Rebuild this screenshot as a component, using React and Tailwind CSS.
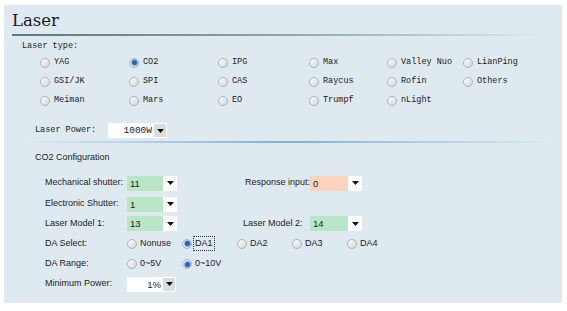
import React from "react";

const mono = { fontFamily: '"Liberation Mono", "DejaVu Sans Mono", monospace' };
const sans = { fontFamily: '"Liberation Sans", Arial, sans-serif' };

function Radio({ checked }) {
  return (
    <span className="inline-flex items-center justify-center w-[10px] h-[10px] rounded-full border border-[#aab3b8] bg-gradient-to-br from-white to-[#d0d6d9] shrink-0">
      {checked && <span className="w-[5px] h-[5px] rounded-full bg-[#2a63b8] ring-1 ring-[#8fb4e4]" />}
    </span>
  );
}

function Arrow() {
  return (
    <svg width="7" height="4" viewBox="0 0 7 4">
      <path d="M0 0h7L3.5 4z" fill="#111" />
    </svg>
  );
}

function Combo({ value, color, width = "w-[50px]" }) {
  return (
    <div className={`flex h-[15px] ${width} bg-white shrink-0`}>
      <div className={`flex-1 ${color} text-[9.5px] pl-[3px] leading-[15px] text-[#222]`}>{value}</div>
      <div className="w-[14px] flex items-center justify-center">
        <Arrow />
      </div>
    </div>
  );
}

function PowerCombo({ value, width }) {
  return (
    <div className={`flex h-[15px] ${width} bg-white items-center shrink-0`}>
      <div className="flex-1 text-right pr-[2px] text-[9.5px] leading-[15px] text-[#222]">{value}</div>
      <div className="w-[12px] h-[13px] mr-[1px] bg-[#dcdcdc] flex items-center justify-center">
        <Arrow />
      </div>
    </div>
  );
}

const laserRows = [
  [["YAG"], ["CO2", true], ["IPG"], ["Max"], ["Valley Nuo"], ["LianPing"]],
  [["GSI/JK"], ["SPI"], ["CAS"], ["Raycus"], ["Rofin"], ["Others"]],
  [["Meiman"], ["Mars"], ["EO"], ["Trumpf"], ["nLight"]],
];
const colW = ["w-[89px]", "w-[89px]", "w-[91px]", "w-[78px]", "w-[76px]", "w-[80px]"];

function LabelRow({ label, children, h }) {
  return (
    <div className={`flex items-center ${h} pl-[41px] whitespace-nowrap`}>
      <div className="w-[82px] shrink-0 text-[9px] text-[#222]">{label}</div>
      {children}
    </div>
  );
}

export default function App() {
  return (
    <div className="w-[567px] h-[311px] bg-white pt-[5px] pl-[4px] pr-[5px]">
      <div className="h-[298px] bg-[#dfeaf0]">
        <div
          className="pl-[8px] pt-[6px] h-[29px] text-[16.5px] leading-[20px] text-[#1a1a1a]"
          style={{ fontFamily: '"DejaVu Serif", "Liberation Serif", serif' }}
        >
          Laser
        </div>
        <div className="ml-[8px] w-[534px] h-[2px] bg-gradient-to-r from-[#5f7783] via-[#8ea4ae] to-[#dfeaf0]" />

        <div style={mono} className="text-[#1a1a1a] whitespace-nowrap">
          <div className="h-[17px] pl-[18px] pt-[4px] text-[8.5px] leading-[12px]">Laser type:</div>
          {laserRows.map((row, i) => (
            <div key={i} className="flex items-center h-[19px] pl-[36px]">
              {row.map(([name, checked], j) => (
                <div key={name} className={`flex items-center gap-[4px] ${colW[j]} text-[8.5px]`}>
                  <Radio checked={checked} />
                  <span>{name}</span>
                </div>
              ))}
            </div>
          ))}
          <div className="pt-[13px] pl-[31px]">
            <div className="flex items-center h-[15px] text-[8.5px]">
              <div className="w-[73px]">Laser Power:</div>
              <PowerCombo value="1000W" width="w-[59px]" />
            </div>
          </div>
        </div>

        <div className="mt-[3px] ml-[16px] w-[537px] h-[2px] bg-gradient-to-r from-[#dfeaf0] via-[#7fb0dc] to-[#dfeaf0]" />

        <div style={sans}>
          <div className="h-[24px] pl-[31px] pt-[8px] text-[9px] leading-[12px] text-[#222]">CO2 Configuration</div>
          <div className="h-[5px]" />
          <LabelRow label="Mechanical shutter:" h="h-[22px]">
            <Combo value="11" color="bg-[#b8e6c6]" />
            <div className="w-[66px] shrink-0" />
            <div className="w-[67px] shrink-0 flex justify-end text-[9px] text-[#222]">
              <span>Response input:</span>
            </div>
            <Combo value="0" color="bg-[#fdd3c0]" width="w-[52px]" />
          </LabelRow>
          <LabelRow label="Electronic Shutter:" h="h-[20px]">
            <Combo value="1" color="bg-[#b8e6c6]" />
          </LabelRow>
          <LabelRow label="Laser Model 1:" h="h-[19px]">
            <Combo value="13" color="bg-[#b8e6c6]" />
            <div className="w-[66px] shrink-0" />
            <div className="w-[67px] shrink-0 text-[9px] text-[#222]">Laser Model 2:</div>
            <Combo value="14" color="bg-[#b8e6c6]" width="w-[52px]" />
          </LabelRow>
          <LabelRow label="DA Select:" h="h-[21px]">
            {["Nonuse", "DA1", "DA2", "DA3", "DA4"].map((n) => (
              <div key={n} className="flex items-center gap-[2px] w-[55px] text-[9px] text-[#222]">
                <Radio checked={n === "DA1"} />
                <span className={n === "DA1" ? "outline outline-1 outline-dotted outline-[#333] px-[1px]" : "px-[1px]"}>{n}</span>
              </div>
            ))}
          </LabelRow>
          <LabelRow label="DA Range:" h="h-[20px]">
            {["0~5V", "0~10V"].map((n) => (
              <div key={n} className="flex items-center gap-[3px] w-[55px] text-[9px] text-[#222]">
                <Radio checked={n === "0~10V"} />
                <span>{n}</span>
              </div>
            ))}
          </LabelRow>
          <LabelRow label="Minimum Power:" h="h-[20px]">
            <PowerCombo value="1%" width="w-[49px]" />
          </LabelRow>
        </div>
      </div>
    </div>
  );
}
